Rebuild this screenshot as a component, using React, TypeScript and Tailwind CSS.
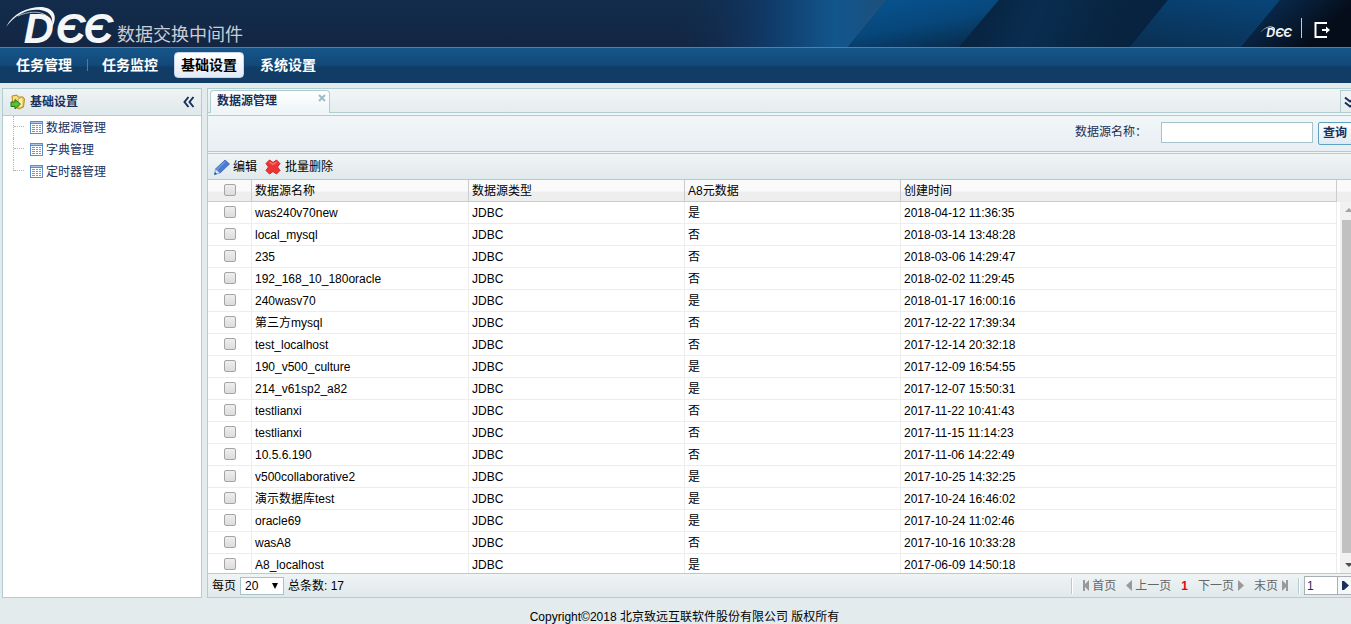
import { useState } from "react";

const menus = ["任务管理", "任务监控", "基础设置", "系统设置"];

const treeItems = ["数据源管理", "字典管理", "定时器管理"];

const rows = [
  { name: "was240v70new", type: "JDBC", a8: true, time: "2018-04-12 11:36:35" },
  { name: "local_mysql", type: "JDBC", a8: false, time: "2018-03-14 13:48:28" },
  { name: "235", type: "JDBC", a8: false, time: "2018-03-06 14:29:47" },
  { name: "192_168_10_180oracle", type: "JDBC", a8: false, time: "2018-02-02 11:29:45" },
  { name: "240wasv70", type: "JDBC", a8: true, time: "2018-01-17 16:00:16" },
  { name: "第三方mysql", type: "JDBC", a8: false, time: "2017-12-22 17:39:34" },
  { name: "test_localhost", type: "JDBC", a8: false, time: "2017-12-14 20:32:18" },
  { name: "190_v500_culture", type: "JDBC", a8: true, time: "2017-12-09 16:54:55" },
  { name: "214_v61sp2_a82", type: "JDBC", a8: true, time: "2017-12-07 15:50:31" },
  { name: "testlianxi", type: "JDBC", a8: false, time: "2017-11-22 10:41:43" },
  { name: "testlianxi", type: "JDBC", a8: false, time: "2017-11-15 11:14:23" },
  { name: "10.5.6.190", type: "JDBC", a8: false, time: "2017-11-06 14:22:49" },
  { name: "v500collaborative2", type: "JDBC", a8: true, time: "2017-10-25 14:32:25" },
  { name: "演示数据库test", type: "JDBC", a8: true, time: "2017-10-24 16:46:02" },
  { name: "oracle69", type: "JDBC", a8: true, time: "2017-10-24 11:02:46" },
  { name: "wasA8", type: "JDBC", a8: false, time: "2017-10-16 10:33:28" },
  { name: "A8_localhost", type: "JDBC", a8: true, time: "2017-06-09 14:50:18" },
];

function Logo({ className }: { className: string }) {
  return (
    <svg viewBox="0 0 112 42" overflow="visible" className={className} role="img" aria-label="DEE">
      <path d="M0 22C8 7 24 1 38 2C50 4 52 13 46 23C48 13 46 7 36 5C22 3 10 9 0 22Z" fill="#f4f6f8" />
      <path d="M12 11C22 6 34 6 40 10" fill="none" stroke="#aeb8c4" strokeWidth="1" />
      <g fill="#f4f6f8" fontFamily="Liberation Sans, sans-serif" fontStyle="italic" fontWeight="bold">
        <text x="18" y="38" fontSize="42">D</text>
        <text x="50" y="38" fontSize="42">Є</text>
        <text x="78" y="38" fontSize="42">Є</text>
      </g>
    </svg>
  );
}

// Slanted light beams on the right half of the banner
function BannerArt() {
  return (
    <svg className="absolute top-0 right-0 h-full" width="701" height="47" viewBox="0 0 701 47" preserveAspectRatio="none" aria-hidden="true">
      <defs>
        <linearGradient id="beamA" x1="0" y1="0" x2="1" y2="0">
          <stop offset="0.1" stopColor="#12294a" stopOpacity="0" />
          <stop offset="0.5" stopColor="#103a68" />
          <stop offset="0.78" stopColor="#12568c" />
          <stop offset="1" stopColor="#1d507d" />
        </linearGradient>
        <linearGradient id="beamB" x1="0.2" y1="0" x2="0.8" y2="1">
          <stop offset="0" stopColor="#07538f" />
          <stop offset="0.5" stopColor="#07477b" />
          <stop offset="1" stopColor="#082b4b" />
        </linearGradient>
        <linearGradient id="beamC" x1="0" y1="0" x2="1" y2="0.1">
          <stop offset="0" stopColor="#07203a" />
          <stop offset="0.4" stopColor="#092d50" />
          <stop offset="0.8" stopColor="#08233f" />
        </linearGradient>
        <linearGradient id="beamD" x1="0.3" y1="1" x2="0.8" y2="0">
          <stop offset="0" stopColor="#0a3155" />
          <stop offset="1" stopColor="#084477" />
        </linearGradient>
        <linearGradient id="beamE" x1="0" y1="0" x2="1" y2="0.5">
          <stop offset="0.2" stopColor="#082b50" />
          <stop offset="0.6" stopColor="#071a30" />
          <stop offset="0.85" stopColor="#050d1a" />
        </linearGradient>
      </defs>
      <path d="M0 0H237L198 47H0Z" fill="url(#beamA)" />
      <path d="M237 0H349L309 47H198Z" fill="url(#beamB)" />
      <path d="M349 0H518L480 47H309Z" fill="url(#beamC)" />
      <path d="M518 0H630L591 47H480Z" fill="url(#beamD)" />
      <path d="M630 0H701V47H591Z" fill="url(#beamE)" />
    </svg>
  );
}

function ExitIcon() {
  return (
    <svg width="17" height="16" viewBox="0 0 17 16" aria-hidden="true">
      <path d="M13 1H1.5V15H13" fill="none" stroke="#fff" strokeWidth="2" />
      <path d="M8 7H12V4.5L16 8L12 11.5V9H8Z" fill="#fff" />
    </svg>
  );
}

function FolderIcon() {
  return (
    <svg width="16" height="16" viewBox="0 0 16 16" aria-hidden="true">
      <path d="M2 2L7 1L8 3L13 3L14.5 5L13.5 13L9 15L3 12Z" fill="#f8dd7c" stroke="#b98a1c" />
      <path d="M8 5L13 3V12L9 14.5Z" fill="#fff1b4" stroke="#c89b2d" strokeWidth="0.8" />
      <path d="M1 8H5V5.5L10.5 10L5 15V12.5H1Z" fill="#5bbf35" stroke="#237614" />
    </svg>
  );
}

function TableIcon() {
  return (
    <svg width="13" height="13" viewBox="0 0 13 13" shapeRendering="crispEdges" aria-hidden="true">
      <path d="M0 0H13V13H0Z" fill="#5b8dce" />
      <path d="M1 3H12V12H1Z" fill="#fff" />
      <path d="M1 1H12V2H1Z" fill="#a9c8ee" />
      <path d="M2 4.5H5M6 4.5H8M9 4.5H11M2 6.5H5M6 6.5H8M9 6.5H11M2 8.5H5M6 8.5H8M9 8.5H11M2 10.5H5M6 10.5H8M9 10.5H11" stroke="#6d9ad4" />
    </svg>
  );
}

function PencilIcon() {
  return (
    <svg width="16" height="16" viewBox="0 0 16 16" aria-hidden="true">
      <path d="M11 1L15.5 5L6 14L1.5 10Z" fill="#4a7bd0" stroke="#3561b5" strokeWidth="0.8" />
      <path d="M11 2.5L3 10.5" stroke="#6f99e0" strokeWidth="1.6" />
      <path d="M1.5 10L6 14L0.5 15.5Z" fill="#dce8f8" stroke="#5f8cd4" strokeWidth="0.7" />
      <path d="M1 13L3 15L0 16Z" fill="#274f9d" />
    </svg>
  );
}

function DeleteIcon() {
  return (
    <svg width="16" height="16" viewBox="0 0 16 16" aria-hidden="true">
      <path d="M4.5 1L8 3.5L11.5 1L15 4.5L12.5 8L15 11.5L11.5 15L8 12.5L4.5 15L1 11.5L3.5 8L1 4.5Z" fill="#ec3434" stroke="#d02525" strokeLinejoin="round" />
      <path d="M4.5 3L8 5.5L11.5 3" fill="none" stroke="#f77" strokeWidth="1.2" />
    </svg>
  );
}

function DoubleChevron({ className }: { className: string }) {
  return (
    <svg width="12" height="12" viewBox="0 0 12 12" className={className} aria-hidden="true">
      <path d="M5.5 1L1.5 6L5.5 11M10.5 1L6.5 6L10.5 11" fill="none" stroke="#18305a" strokeWidth="2" />
    </svg>
  );
}

function PagerArrow({ bar, flip }: { bar?: boolean; flip?: boolean }) {
  return (
    <svg width="7" height="11" viewBox="0 0 7 11" className={flip ? "rotate-180" : ""} aria-hidden="true">
      <path d={bar ? "M0 0H2V4L6 0V11L2 7V11H0Z" : "M6 0V11L0 5.5Z"} fill="#999" />
    </svg>
  );
}

function Check({ label }: { label: string }) {
  return (
    <input
      type="checkbox"
      aria-label={label}
      className="block mx-auto mb-0.5 w-3 h-3 appearance-none rounded-xs border border-[#a5a5a5] bg-linear-to-b from-[#eeeeee] to-[#dcdcdc] checked:bg-blue-500"
    />
  );
}

function Separator() {
  return <span className="w-[2px] h-4 border-l border-[#b5cbd1] bg-white" />;
}

export default function App() {
  const [pageSize, setPageSize] = useState("20");

  return (
    <div className="flex flex-col h-screen overflow-hidden bg-[#e4ebed] text-xs text-black font-['Liberation_Sans','Noto_Sans_CJK_SC',sans-serif]">
      {/* Banner */}
      <header className="relative shrink-0 h-12 border-b border-[#5d7d92] bg-linear-to-b from-[#122c4c] to-[#132643]">
        <BannerArt />
        <div className="relative flex h-full justify-between">
          <div className="flex items-end pl-1.5">
            <Logo className="w-[111px] h-[42px]" />
            <h1 className="text-lg leading-6 text-[#c9ced4]">数据交换中间件</h1>
          </div>
          <div className="flex items-center gap-2 pt-3 pr-5">
            <a href="#about" className="pt-1">
              <Logo className="w-8 h-3" />
            </a>
            <span className="w-px h-5 mb-1 bg-[#b9cbd8]" />
            <button type="button" aria-label="退出" className="pl-1">
              <ExitIcon />
            </button>
          </div>
        </div>
      </header>

      {/* Main menu */}
      <nav className="flex shrink-0 items-center h-[35px] pl-2 pb-px bg-linear-to-b from-[#16568a] via-[#124878] via-50% to-[#103c66] to-55% text-sm font-bold text-white">
        {menus.map((menu, i) => (
          <div key={menu} className="flex items-center">
            <a
              href="#menu"
              className={
                i === 2
                  ? "block rounded-sm border border-[#c3d4ee] bg-linear-to-b from-white to-[#e3ebf8] px-1.5 leading-6 text-black"
                  : "block px-2 leading-6"
              }
            >
              {menu}
            </a>
            {i === 0 && <span className="ml-[7px] mr-1.5 w-px h-3 bg-[#4a7ba3]" />}
            {i > 0 && i < 3 && <span className="w-2" />}
          </div>
        ))}
      </nav>

      <div className="flex flex-1 min-h-0 gap-[5px] pt-[5px] pl-0.5">
        {/* Side tree */}
        <aside className="shrink-0 w-[200px] border border-[#b0cdd2] bg-white">
          <div className="flex items-center h-[27px] pl-[7px] pr-1.5 border-b border-[#b0cdd2] bg-linear-to-b from-[#eff4f5] to-[#dfe8ea]">
            <FolderIcon />
            <h2 className="flex-1 pl-1 font-bold text-[#18305a]">基础设置</h2>
            <button type="button" aria-label="收起">
              <DoubleChevron className="" />
            </button>
          </div>
          <ul className="pl-2.5 text-[#18305a]">
            {treeItems.map((item, i) => (
              <li key={item} className="flex h-[22px]">
                <span className={i === 2 ? "w-px h-[11px] border-l border-dotted border-[#b5b5b5]" : "w-px border-l border-dotted border-[#b5b5b5]"} />
                <span className="w-2.5 h-[11px] border-b border-dotted border-[#b5b5b5]" />
                <a href="#tree" className="flex items-center gap-[3px] pl-1.5 pt-px">
                  <TableIcon />
                  {item}
                </a>
              </li>
            ))}
          </ul>
        </aside>

        {/* The work area runs a little past the right edge of the window */}
        <main className="flex flex-col flex-1 min-w-0 -mr-2 border border-[#b0cdd2] bg-[#f0f5f6]">
          <div className="flex shrink-0 justify-between h-6 pl-0.5 pt-px border-b border-[#b0cdd2] bg-linear-to-b from-[#f1f5f6] to-[#e6edef]">
            <div className="flex justify-between w-[120px] h-[23px] pl-1.5 pr-[3px] rounded-t-sm border border-b-0 border-[#b0cdd2] bg-linear-to-b from-white to-[#edf4f7]">
              <a href="#tab" className="font-bold leading-5 text-[#18305a]">数据源管理</a>
              <button type="button" aria-label="关闭" className="self-start pt-[3px]">
                <svg width="8" height="8" viewBox="0 0 8 8" aria-hidden="true">
                  <path d="M1 1L7 7M7 1L1 7" stroke="#9dbcc6" strokeWidth="2" />
                </svg>
              </button>
            </div>
            <button type="button" aria-label="更多" className="w-[18px] pl-[3px] border border-b-0 border-[#b0cdd2]">
              <DoubleChevron className="-rotate-90" />
            </button>
          </div>

          {/* Search */}
          <form className="flex shrink-0 items-center justify-end h-[37px] mt-0.5 pb-[3px] border-y border-[#b0cdd2] bg-linear-to-b from-[#f1f6f8] to-[#e9eef4]">
            <label htmlFor="sourceName" className="pr-3.5 text-[#18305a]">数据源名称：</label>
            <input id="sourceName" type="text" className="w-[152px] h-[21px] px-1 border border-[#a5c3cb] bg-white" />
            <button
              type="submit"
              className="w-10 h-[23px] mt-0.5 ml-[5px] pr-1.5 rounded-xs border border-[#5fa1c3] bg-linear-to-b from-white to-[#dfeaf4] font-bold text-[#18305a]"
            >
              查询
            </button>
          </form>

          {/* Toolbar */}
          <div className="flex shrink-0 items-center gap-2 h-[27px] mt-px pl-1.5 border-y border-[#b0cdd2] bg-linear-to-b from-[#f1f5f6] to-[#e0e9eb]">
            <button type="button" className="flex items-center gap-[3px]">
              <PencilIcon />
              编辑
            </button>
            <button type="button" className="flex items-center gap-1">
              <DeleteIcon />
              批量删除
            </button>
          </div>

          {/* Grid */}
          <div className="flex flex-1 min-h-0 overflow-hidden bg-white">
            <div className="flex-1 min-w-0">
              <table className="w-full table-fixed border-separate border-spacing-0 text-left">
                <colgroup>
                  <col className="w-[44px]" />
                  <col className="w-[217px]" />
                  <col className="w-[216px]" />
                  <col className="w-[216px]" />
                  <col />
                </colgroup>
                <thead className="bg-linear-to-b from-[#fafafa] from-50% to-[#eeeeee] to-55%">
                  <tr className="h-[22px] *:border-b *:border-r *:border-[#cccccc] *:py-0 *:font-normal">
                    <th className="px-0"><Check label="全选" /></th>
                    <th className="px-[3px]">数据源名称</th>
                    <th className="px-[3px]">数据源类型</th>
                    <th className="px-[3px]">A8元数据</th>
                    <th className="px-[3px]">创建时间</th>
                  </tr>
                </thead>
                <tbody>
                  {rows.map((row, i) => (
                    <tr key={i} className="h-[22px] *:border-b *:border-r *:border-[#ededed] *:py-0">
                      <td className="px-0"><Check label={row.name} /></td>
                      <td className="px-[3px]">{row.name}</td>
                      <td className="px-[3px]">{row.type}</td>
                      <td className="px-[3px]">{row.a8 ? "是" : "否"}</td>
                      <td className="px-[3px]">{row.time}</td>
                    </tr>
                  ))}
                </tbody>
              </table>
            </div>
            <div className="flex flex-col w-[21px]">
              <div className="shrink-0 h-[22px] bg-linear-to-b from-[#fafafa] from-50% to-[#eeeeee] to-55%" />
              <div className="flex flex-col flex-1 items-center justify-between ml-[3px] py-1.5 bg-[#f1f1f1]">
                <svg width="8" height="4" viewBox="0 0 8 4" aria-hidden="true">
                  <path d="M4 0L8 4H0Z" fill="#a3a3a3" />
                </svg>
                <div className="flex-1 w-3.5 mt-2 mb-2.5 bg-[#c1c1c1]" />
                <svg width="8" height="4" viewBox="0 0 8 4" aria-hidden="true">
                  <path d="M0 0H8L4 4Z" fill="#505050" />
                </svg>
              </div>
            </div>
          </div>

          {/* Pager */}
          <div className="flex shrink-0 items-center justify-between h-6 pl-1 border-t border-[#b0cdd2] bg-linear-to-b from-[#eff4f5] to-[#e0e9eb]">
            <div className="flex items-center gap-1">
              <label htmlFor="pageSize">每页</label>
              <div className="relative">
                <select
                  id="pageSize"
                  value={pageSize}
                  onChange={(e) => setPageSize(e.target.value)}
                  className="block w-11 h-[18px] pl-1 appearance-none border border-[#a5c3cb] bg-white leading-4"
                >
                  <option>20</option>
                  <option>50</option>
                  <option>100</option>
                </select>
                <svg width="6" height="6" viewBox="0 0 6 6" className="absolute top-1.5 right-1.5 pointer-events-none" aria-hidden="true">
                  <path d="M0 0H6L3 6Z" />
                </svg>
              </div>
              <span>总条数: 17</span>
            </div>
            <div className="flex items-center text-[#666666]">
              <Separator />
              <button type="button" className="flex items-center gap-0.5 ml-2.5">
                <PagerArrow bar />
                首页
              </button>
              <button type="button" className="flex items-center gap-0.5 ml-2.5">
                <PagerArrow />
                上一页
              </button>
              <span className="mx-2.5 font-bold text-red-600">1</span>
              <button type="button" className="flex items-center gap-[3px]">
                下一页
                <PagerArrow flip />
              </button>
              <button type="button" className="flex items-center gap-[3px] ml-2.5 mr-2.5">
                末页
                <PagerArrow bar flip />
              </button>
              <Separator />
              <input aria-label="页码" type="text" defaultValue="1" className="w-[34px] h-[19px] ml-1 px-0.5 border border-[#a9b0b5] bg-white text-[#18305a]" />
              <button type="button" aria-label="跳转" className="flex items-center w-5 h-[19px] pl-1 border-y border-[#a9b0b5] bg-[#f4f8fa]">
                <svg width="7" height="9" viewBox="0 0 7 9" aria-hidden="true">
                  <path d="M0 0H2L7 4.5L2 9H0Z" fill="#18305a" />
                </svg>
              </button>
            </div>
          </div>
        </main>
      </div>

      <footer className="shrink-0 h-[26px] pt-[11px] pl-[18px] text-center leading-4">Copyright©2018 北京致远互联软件股份有限公司 版权所有</footer>
    </div>
  );
}
